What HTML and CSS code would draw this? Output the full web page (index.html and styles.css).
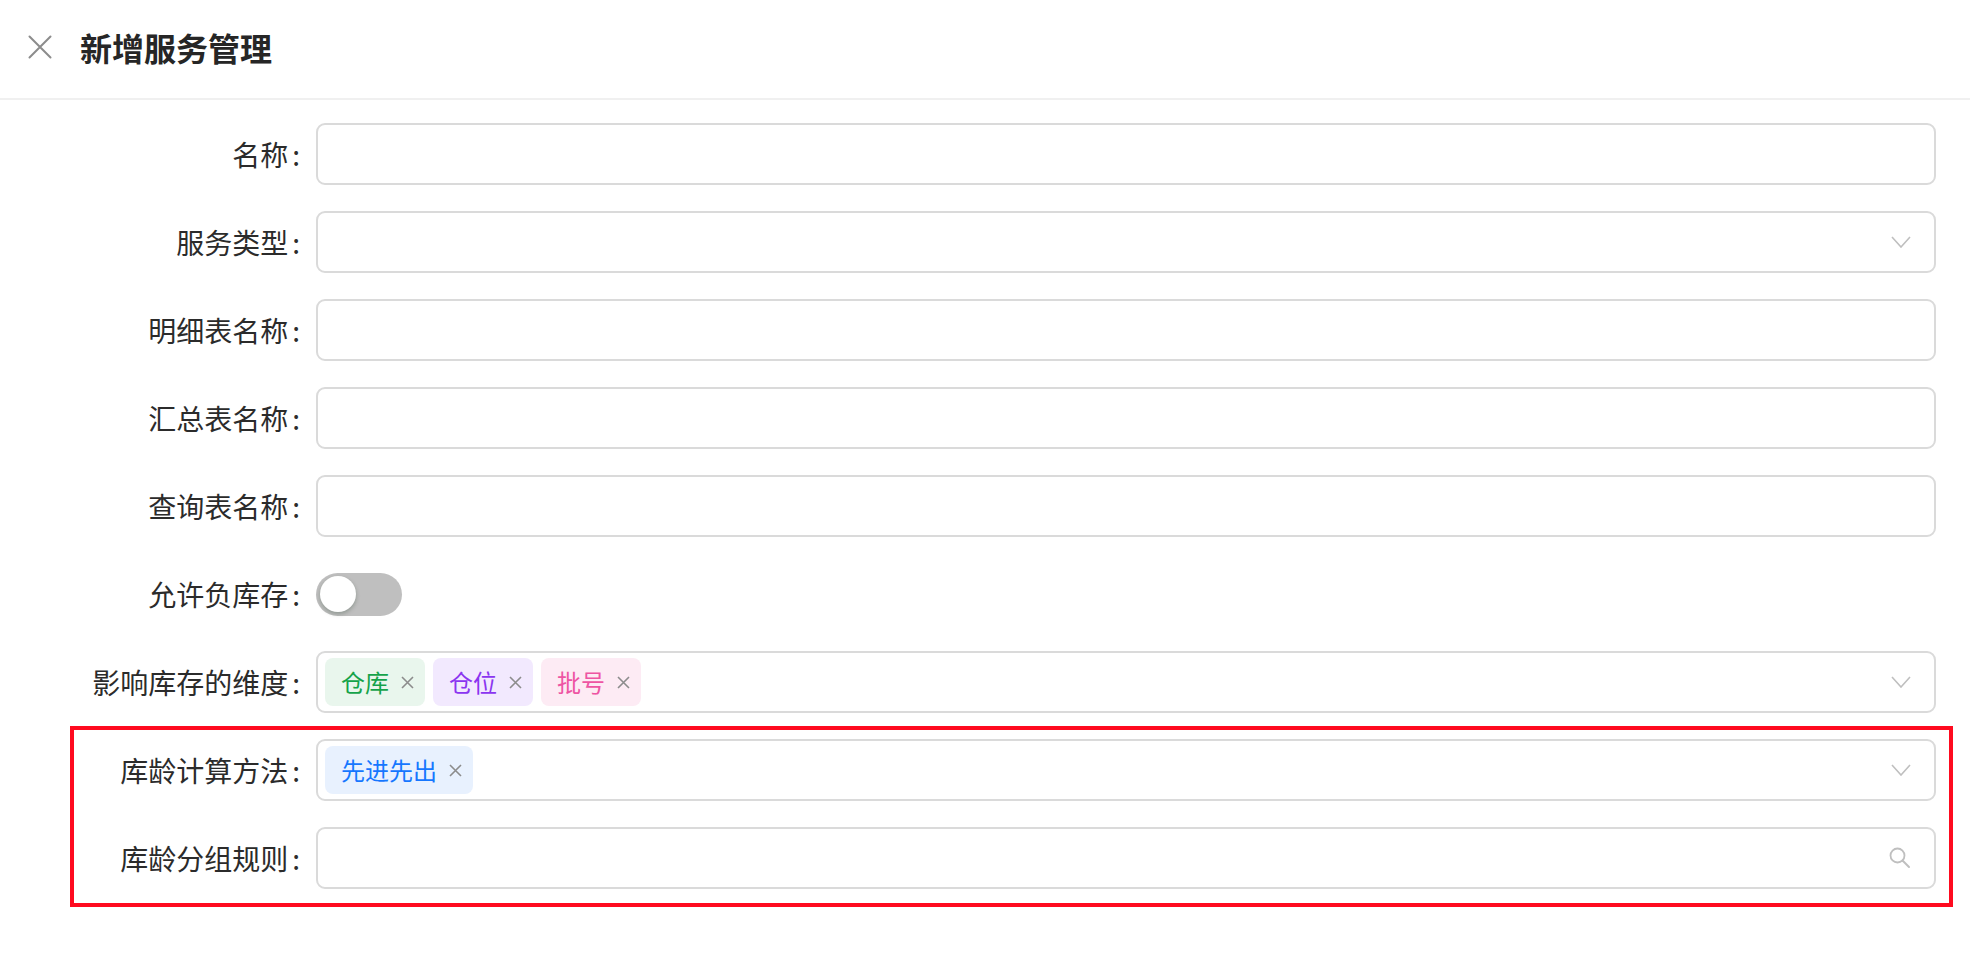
FILE: index.html
```html
<!DOCTYPE html>
<html lang="zh-CN">
<head>
<meta charset="utf-8">
<title>新增服务管理</title>
<link rel="stylesheet" href="styles.css">
</head>
<body>
<div class="drawer">
  <header class="header">
    <svg class="close-icon" width="24" height="24" viewBox="0 0 24 24" aria-hidden="true">
      <path d="M1.5 1.5 L22.5 22.5 M22.5 1.5 L1.5 22.5" stroke="#8c8c8c" stroke-width="2" stroke-linecap="round" fill="none"/>
    </svg>
    <h1 class="title">新增服务管理</h1>
  </header>

  <form class="form">
    <div class="row">
      <label class="label">名称<span class="colon">:</span></label>
      <div class="control input"></div>
    </div>
    <div class="row">
      <label class="label">服务类型<span class="colon">:</span></label>
      <div class="control input select">
        <svg class="suffix" width="20" height="12" viewBox="0 0 20 12" aria-hidden="true"><path d="M1 1 L10 11 L19 1" stroke="#bfbfbf" stroke-width="1.6" fill="none"/></svg>
      </div>
    </div>
    <div class="row">
      <label class="label">明细表名称<span class="colon">:</span></label>
      <div class="control input"></div>
    </div>
    <div class="row">
      <label class="label">汇总表名称<span class="colon">:</span></label>
      <div class="control input"></div>
    </div>
    <div class="row">
      <label class="label">查询表名称<span class="colon">:</span></label>
      <div class="control input"></div>
    </div>
    <div class="row">
      <label class="label">允许负库存<span class="colon">:</span></label>
      <div class="control">
        <span class="switch"><span class="knob"></span></span>
      </div>
    </div>
    <div class="row">
      <label class="label">影响库存的维度<span class="colon">:</span></label>
      <div class="control input select">
        <span class="tag tag-green">仓库<svg class="tag-close" width="13" height="13" viewBox="0 0 13 13" aria-hidden="true"><path d="M1 1 L12 12 M12 1 L1 12" stroke="#8c8c8c" stroke-width="1.6" fill="none"/></svg></span>
        <span class="tag tag-purple">仓位<svg class="tag-close" width="13" height="13" viewBox="0 0 13 13" aria-hidden="true"><path d="M1 1 L12 12 M12 1 L1 12" stroke="#8c8c8c" stroke-width="1.6" fill="none"/></svg></span>
        <span class="tag tag-pink">批号<svg class="tag-close" width="13" height="13" viewBox="0 0 13 13" aria-hidden="true"><path d="M1 1 L12 12 M12 1 L1 12" stroke="#8c8c8c" stroke-width="1.6" fill="none"/></svg></span>
        <svg class="suffix" width="20" height="12" viewBox="0 0 20 12" aria-hidden="true"><path d="M1 1 L10 11 L19 1" stroke="#bfbfbf" stroke-width="1.6" fill="none"/></svg>
      </div>
    </div>
    <div class="highlight">
      <div class="row">
        <label class="label">库龄计算方法<span class="colon">:</span></label>
        <div class="control input select">
          <span class="tag tag-blue">先进先出<svg class="tag-close" width="13" height="13" viewBox="0 0 13 13" aria-hidden="true"><path d="M1 1 L12 12 M12 1 L1 12" stroke="#8c8c8c" stroke-width="1.6" fill="none"/></svg></span>
          <svg class="suffix" width="20" height="12" viewBox="0 0 20 12" aria-hidden="true"><path d="M1 1 L10 11 L19 1" stroke="#bfbfbf" stroke-width="1.6" fill="none"/></svg>
        </div>
      </div>
      <div class="row">
        <label class="label">库龄分组规则<span class="colon">:</span></label>
        <div class="control input select">
          <svg class="suffix" width="22" height="22" viewBox="0 0 22 22" aria-hidden="true"><circle cx="8.5" cy="8.5" r="7" stroke="#bfbfbf" stroke-width="1.8" fill="none"/><path d="M13.5 13.5 L20 20" stroke="#bfbfbf" stroke-width="2" stroke-linecap="round"/></svg>
        </div>
      </div>
    </div>
  </form>
</div>
</body>
</html>
```

FILE: styles.css
```css
* { box-sizing: border-box; }

html, body {
  margin: 0;
  padding: 0;
  background: #ffffff;
}

body {
  font-family: "Noto Sans CJK SC", "Noto Sans", "Liberation Sans", sans-serif;
  color: #262626;
}

.drawer {
  width: 1970px;
  min-height: 954px;
}

.header {
  height: 100px;
  display: flex;
  align-items: center;
  padding-left: 28px;
  padding-bottom: 4px;
  border-bottom: 2px solid #f0f0f0;
}

.close-icon {
  flex: none;
  display: block;
}

.title {
  margin: 0 0 0 28px;
  font-size: 32px;
  font-weight: 700;
  color: #262626;
  line-height: 1;
}

.form {
  display: flex;
  flex-direction: column;
  gap: 26px;
  padding: 23px 34px 0 0;
}

.row {
  display: flex;
  align-items: center;
  height: 62px;
}

.label {
  flex: none;
  width: 316px;
  padding-right: 16px;
  text-align: right;
  font-size: 28px;
  line-height: 1;
  color: #2b2b2b;
  white-space: nowrap;
}

.colon {
  margin-left: 4px;
}

.control {
  flex: 1;
  height: 62px;
  display: flex;
  align-items: center;
}

.input {
  border: 2px solid #dadada;
  border-radius: 9px;
  padding: 0 7px;
  gap: 8px;
}

.select {
  position: relative;
}

.suffix {
  margin-left: auto;
  margin-right: 16px;
  display: block;
  flex: none;
}

.switch {
  width: 86px;
  height: 43px;
  border-radius: 22px;
  background: #bfbfbf;
  display: flex;
  align-items: center;
  padding-left: 4px;
}

.knob {
  width: 36px;
  height: 36px;
  border-radius: 50%;
  background: #ffffff;
  box-shadow: 0 2px 4px rgba(0, 35, 11, 0.25);
}

.tag {
  height: 48px;
  display: inline-flex;
  align-items: center;
  padding: 0 11px 0 16px;
  border-radius: 8px;
  font-size: 24px;
  line-height: 1;
  white-space: nowrap;
}

.tag-close {
  margin-left: 12px;
  display: block;
  flex: none;
}

.tag-green { background: #e9f6ed; color: #15a34a; }
.tag-purple { background: #f2e9fe; color: #8b35f0; }
.tag-pink { background: #fdebf4; color: #ee55a3; }
.tag-blue { background: #e8f1fe; color: #1677ff; }

.highlight {
  position: relative;
  display: flex;
  flex-direction: column;
  gap: 26px;
}

.highlight::after {
  content: "";
  position: absolute;
  top: -13px;
  bottom: -18px;
  left: 70px;
  right: -17px;
  border: 4px solid #ff0a1f;
  pointer-events: none;
}
```
